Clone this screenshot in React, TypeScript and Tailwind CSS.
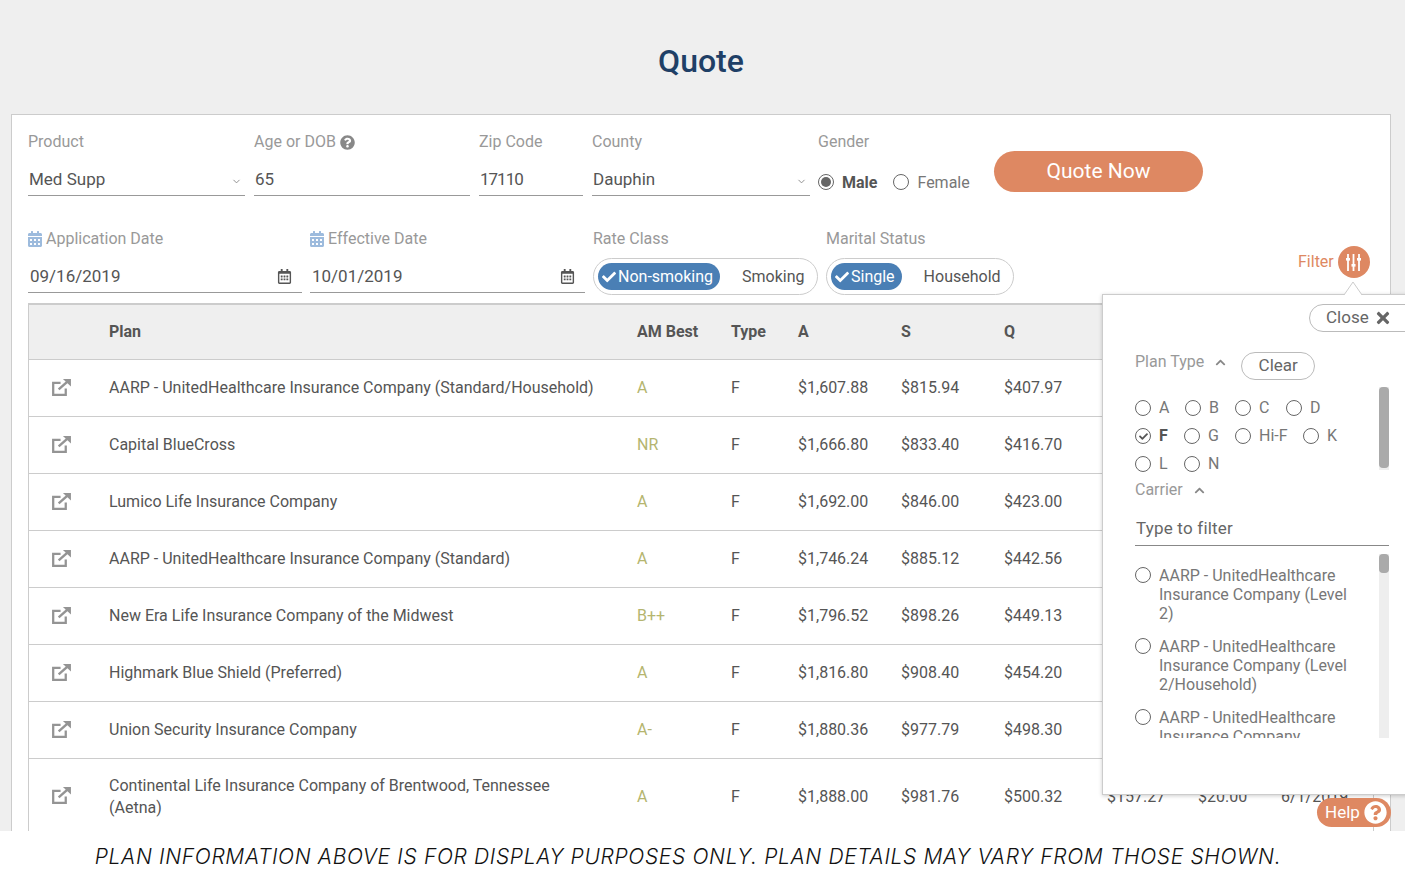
import { FaCalendarAlt, FaCheck, FaChevronUp, FaQuestionCircle, FaRegCalendarAlt, FaTimes } from "react-icons/fa";
import { FiChevronDown } from "react-icons/fi";

const ROWS = [
  { plan: "AARP - UnitedHealthcare Insurance Company (Standard/Household)", am: "A", a: "$1,607.88", s: "$815.94", q: "$407.97", m: "$137.27", fee: "$20.00", date: "6/1/2019" },
  { plan: "Capital BlueCross", am: "NR", a: "$1,666.80", s: "$833.40", q: "$416.70", m: "$138.90", fee: "$20.00", date: "6/1/2019" },
  { plan: "Lumico Life Insurance Company", am: "A", a: "$1,692.00", s: "$846.00", q: "$423.00", m: "$141.00", fee: "$20.00", date: "6/1/2019" },
  { plan: "AARP - UnitedHealthcare Insurance Company (Standard)", am: "A", a: "$1,746.24", s: "$885.12", q: "$442.56", m: "$147.52", fee: "$20.00", date: "6/1/2019" },
  { plan: "New Era Life Insurance Company of the Midwest", am: "B++", a: "$1,796.52", s: "$898.26", q: "$449.13", m: "$149.71", fee: "$20.00", date: "6/1/2019" },
  { plan: "Highmark Blue Shield (Preferred)", am: "A", a: "$1,816.80", s: "$908.40", q: "$454.20", m: "$151.40", fee: "$20.00", date: "6/1/2019" },
  { plan: "Union Security Insurance Company", am: "A-", a: "$1,880.36", s: "$977.79", q: "$498.30", m: "$166.10", fee: "$20.00", date: "6/1/2019" },
  { plan: "Continental Life Insurance Company of Brentwood, Tennessee (Aetna)", am: "A", a: "$1,888.00", s: "$981.76", q: "$500.32", m: "$157.27", fee: "$20.00", date: "6/1/2019" },
];

const CARRIERS = [
  "AARP - UnitedHealthcare Insurance Company (Level 2)",
  "AARP - UnitedHealthcare Insurance Company (Level 2/Household)",
  "AARP - UnitedHealthcare Insurance Company (Standard/Household)",
];

const COLS = "grid grid-cols-[80px_528px_94px_67px_103px_103px_103px_91px_83px_1fr] items-center";

function LinkIcon() {
  return (
    <svg viewBox="0 0 20 18" className="-mt-[2px] block h-[17px] w-[19px]" fill="none">
      <path d="M9 4.2H1.2v12.6H14.5V10" stroke="#949494" strokeWidth="2.4" />
      <path d="M7 11 16 3" stroke="#949494" strokeWidth="2.6" />
      <path d="M11.5 0H20v8z" fill="#949494" />
    </svg>
  );
}

function SlidersIcon() {
  return (
    <svg viewBox="0 0 15 17" className="h-[17px] w-[15px]" fill="white">
      <rect x="1.1" y="0" width="1.8" height="17" />
      <rect x="6.6" y="0" width="1.8" height="17" />
      <rect x="12.1" y="0" width="1.8" height="17" />
      <rect x="0" y="4" width="4" height="2.6" />
      <rect x="5.5" y="10" width="4" height="2.6" />
      <rect x="11" y="4" width="4" height="2.6" />
    </svg>
  );
}

function Radio({ state }: { state?: "dot" | "check" }) {
  return (
    <span className="flex h-4 w-4 shrink-0 items-center justify-center rounded-full border border-[#666] bg-white">
      {state === "dot" && <span className="h-[10px] w-[10px] rounded-full bg-[#666]" />}
      {state === "check" && <FaCheck className="text-[9px] text-[#555]" />}
    </span>
  );
}

function Field({ label, value, width, select, date }: { label: React.ReactNode; value: React.ReactNode; width: string; select?: boolean; date?: boolean }) {
  return (
    <div className={width}>
      <div className="flex h-[20px] items-center gap-1 leading-5 text-[#999]">{label}</div>
      <div className={`mt-[9px] flex h-[35px] items-center justify-between border-b border-[#999] pt-[3px] text-[17px] text-[#555] ${date ? "pl-[2px]" : "pl-px"}`}>
        <span>{value}</span>
        {select && <FiChevronDown className="mr-[3px] mt-[3px] text-[11px] text-[#888]" />}
        {date && <FaRegCalendarAlt className="mr-[10px] text-[15px] text-[#555]" />}
      </div>
    </div>
  );
}

function Pill({ on, off, w, offPad }: { on: string; off: string; w: string; offPad: string }) {
  return (
    <div className={`flex h-[37px] items-center rounded-full border border-[#ccc] pl-[4px] ${w}`}>
      <span className="flex h-[27px] items-center gap-[2px] rounded-full bg-[#4a7fb5] pl-[4px] pr-[7px] text-white">
        <FaCheck className="text-[14px]" />
        {on}
      </span>
      <span className={`text-[#555] ${offPad}`}>{off}</span>
    </div>
  );
}

function PlanOption({ label, w, state }: { label: string; w: string; state?: "check" }) {
  return (
    <label className={`flex items-center gap-2 ${w} ${state ? "font-bold text-[#555]" : "text-[#777]"}`}>
      <Radio state={state} />
      {label}
    </label>
  );
}

function FilterPopover() {
  return (
    <div className="absolute left-[1102px] top-[294px] h-[501px] w-[320px] border border-[#ccc] bg-white shadow-[0_1px_4px_rgba(0,0,0,0.2)]">
      <svg viewBox="0 0 40 13" className="absolute left-[230px] top-[-13px] h-[13px] w-[40px]">
        <path d="M11 13 20 0l9 13" fill="white" stroke="#ccc" />
      </svg>
      <div className="absolute left-[206px] top-[9px] flex h-[28px] w-[110px] items-center gap-[5px] rounded-full border border-[#bbb] pl-4 text-[17px] text-[#666]">
        Close <FaTimes className="text-[18px] text-[#666]" />
      </div>
      <div className="ml-[32px] flex items-center pt-[55px]">
        <span className="pb-[7px] text-[#999]">Plan Type</span>
        <FaChevronUp className="mb-[7px] ml-[11px] text-[11px] text-[#888]" />
        <span className="ml-[15px] flex h-[28px] w-[74px] items-center justify-center rounded-full border border-[#bbb] text-[17px] text-[#666]">Clear</span>
      </div>
      <div className="ml-[32px] mt-[6px] flex w-[254px] justify-between">
        <div className="w-[234px] pt-[7px]">
          <div className="flex h-[28px] items-center">
            <PlanOption label="A" w="w-[50px]" />
            <PlanOption label="B" w="w-[50px]" />
            <PlanOption label="C" w="w-[51px]" />
            <PlanOption label="D" w="w-[40px]" />
          </div>
          <div className="flex h-[28px] items-center">
            <PlanOption label="F" w="w-[49px]" state="check" />
            <PlanOption label="G" w="w-[51px]" />
            <PlanOption label="Hi-F" w="w-[68px]" />
            <PlanOption label="K" w="w-[40px]" />
          </div>
          <div className="flex h-[28px] items-center">
            <PlanOption label="L" w="w-[49px]" />
            <PlanOption label="N" w="w-[40px]" />
          </div>
        </div>
        <div className="h-[83px] w-[10px] bg-[#eee]">
          <div className="h-[81px] rounded-[4px] bg-[#aaa]" />
        </div>
      </div>
      <div className="ml-[32px] flex h-[24px] items-center text-[#999]">
        Carrier
        <FaChevronUp className="ml-[11px] text-[11px] text-[#888]" />
      </div>
      <div className="ml-[32px] mt-[11px] flex h-[33px] w-[254px] items-center border-b border-[#888] pl-px text-[17px] tracking-[0.2px] text-[#666]">Type to filter</div>
      <div className="ml-[32px] mt-[8px] flex h-[184px] w-[254px] justify-between overflow-hidden">
        <div className="w-[220px] pt-[12px] leading-[19px] text-[#777]">
          {CARRIERS.map((c) => (
            <div key={c} className="mb-[14px] flex gap-2">
              <span className="mt-[1px]"><Radio /></span>
              <span>{c}</span>
            </div>
          ))}
        </div>
        <div className="h-[184px] w-[10px] bg-[#eee]">
          <div className="h-[19px] rounded-[4px] bg-[#aaa]" />
        </div>
      </div>
    </div>
  );
}

export default function App() {
  return (
    <div className="flex h-[893px] flex-col overflow-hidden bg-[#efefef] font-['Roboto',sans-serif] text-base">
      <main className="relative min-h-0 flex-1 overflow-hidden">
        <h1 className="flex h-[114px] items-center justify-center pr-[3px] pt-[8px] text-[32px] font-medium text-[#1f3f66]">Quote</h1>
        <section className="ml-[11px] h-[800px] w-[1380px] border border-[#ccc] bg-white px-4 pt-[17px]">
          <div className="flex gap-[9px]">
            <Field label="Product" value="Med Supp" width="w-[217px]" select />
            <Field label={<>Age or DOB <FaQuestionCircle className="text-[15px] text-[#888]" /></>} value="65" width="w-[216px]" />
            <Field label="Zip Code" value={<span className="tracking-[-1px]">17110</span>} width="w-[104px]" />
            <Field label="County" value="Dauphin" width="w-[218px]" select />
            <div className="-ml-px w-[167px]">
              <div className="h-[20px] leading-5 text-[#999]">Gender</div>
              <div className="mt-[18px] flex items-center pt-[1px]">
                <span className="-mt-[2px]"><Radio state="dot" /></span>
                <span className="ml-2 font-bold text-[#555]">Male</span>
                <span className="-mt-[2px] ml-[16px]"><Radio /></span>
                <span className="ml-2 text-[#777]">Female</span>
              </div>
            </div>
            <button className="mt-[19px] h-[41px] w-[209px] rounded-full bg-[#de8862] text-[21px] text-white">Quote Now</button>
          </div>
          <div className="mt-[33px] flex items-start">
            <div className="w-[282px]">
              <Field label={<><FaCalendarAlt className="-mx-px text-[16px] text-[#9dbbdd]" />Application Date</>} value="09/16/2019" width="w-[274px]" date />
            </div>
            <div className="w-[283px]">
              <Field label={<><FaCalendarAlt className="-mx-px text-[16px] text-[#9dbbdd]" />Effective Date</>} value="10/01/2019" width="w-[275px]" date />
            </div>
            <div className="w-[233px]">
              <div className="mb-[9px] h-[20px] leading-5 text-[#999]">Rate Class</div>
              <Pill on="Non-smoking" off="Smoking" w="w-[225px]" offPad="pl-[22px]" />
            </div>
            <div className="w-[472px]">
              <div className="mb-[9px] h-[20px] leading-5 text-[#999]">Marital Status</div>
              <Pill on="Single" off="Household" w="w-[188px]" offPad="pl-[22px]" />
            </div>
            <div className="mt-[17px] flex items-center gap-1 text-[#de8862]">
              Filter
              <span className="flex h-[32px] w-[32px] items-center justify-center rounded-full bg-[#de8862]"><SlidersIcon /></span>
            </div>
          </div>
          <div className="mt-[8px] border-x border-t-[2px] border-[#ccc]">
            <div className={`${COLS} h-[55px] border-b border-[#ccc] bg-[#efefef] font-bold text-[#555]`}>
              <span />
              <span>Plan</span>
              <span>AM Best</span>
              <span>Type</span>
              <span>A</span>
              <span>S</span>
              <span>Q</span>
              <span>M</span>
              <span>Fee</span>
              <span>Date</span>
            </div>
            {ROWS.map((r) => (
              <div key={r.plan} className={`${COLS} min-h-[57px] border-b border-[#ccc] py-[8px] text-[#555] last:h-[76px]`}>
                <span className="pl-[23px]"><LinkIcon /></span>
                <span className="pr-[40px] leading-[22px]">{r.plan}</span>
                <span className="text-[#b5b56f]">{r.am}</span>
                <span>F</span>
                <span>{r.a}</span>
                <span>{r.s}</span>
                <span>{r.q}</span>
                <span>{r.m}</span>
                <span>{r.fee}</span>
                <span>{r.date}</span>
              </div>
            ))}
          </div>
        </section>
        <FilterPopover />
        <div className="absolute left-[1317px] top-[798px] flex h-[29px] w-[74px] items-center gap-1 rounded-full bg-[#de8862] pl-[8px] text-[17px] text-white">
          Help <FaQuestionCircle className="text-[23px]" />
        </div>
      </main>
      <footer className="flex h-[62px] shrink-0 items-center justify-center bg-white pb-[10px] pr-[29px] font-['Inter',sans-serif] text-[21px] font-light italic tracking-[0.65px] text-[#111]">
        PLAN INFORMATION ABOVE IS FOR DISPLAY PURPOSES ONLY. PLAN DETAILS MAY VARY FROM THOSE SHOWN.
      </footer>
    </div>
  );
}
